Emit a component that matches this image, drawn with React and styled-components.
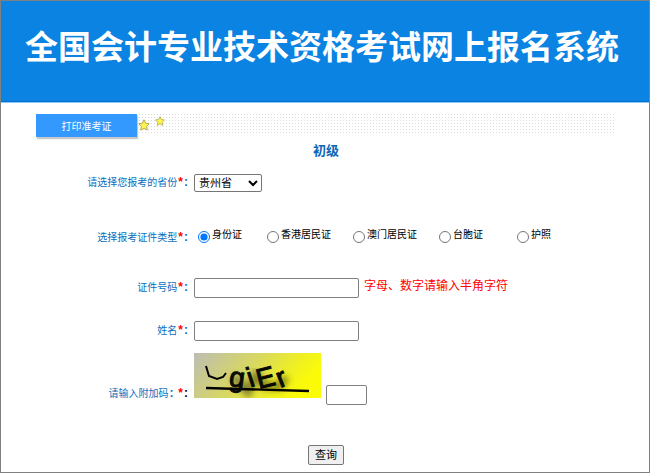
import React, { useState } from 'react';
import styled, { createGlobalStyle } from 'styled-components';

const GlobalStyle = createGlobalStyle`
    * {
        box-sizing: border-box;
    }
    body {
        margin: 0;
        background: #fff;
        font-family: "Liberation Sans", "Noto Sans CJK SC", sans-serif;
        font-size: 10px;
        color: #000;
    }
`

const Page = styled.div`
    min-height: 100vh;
    border: 1px solid #808080;
`

const Header = styled.header`
    display: flex;
    align-items: center;
    justify-content: center;
    height: 102px;
    padding-bottom: 7px;
    background: #0a83e2;
    border-bottom: 1px solid #8cc8f5;
    box-shadow: inset 0 -1px 0 #0570d0;
`

const SiteTitle = styled.h1`
    margin: 0;
    padding-right: 6px;
    font-size: 33px;
    line-height: 40px;
    font-weight: 700;
    white-space: nowrap;
    color: #fff;
`

const TabBar = styled.nav`
    display: flex;
    align-items: flex-start;
    height: 20px;
    margin: 10px 33px 0 35px;
    background-color: #fff;
    background-image: radial-gradient(circle, #dcdcdc 0 1px, transparent 1px);
    background-size: 3px 3px;
`

const Tab = styled.a`
    width: 101px;
    height: 23px;
    margin-top: 1px;
    line-height: 26px;
    text-align: center;
    text-decoration: none;
    color: #fff;
    background: #3399ff;
    box-shadow: 1px 2px 1px #c8c8c8;
`

const Stars = styled.svg`
    width: 30px;
    height: 20px;
`

const Form = styled.form`
    display: flex;
    flex-direction: column;
`

const Level = styled.h2`
    margin: 9px 0 13px;
    padding-left: 2px;
    font-size: 13px;
    line-height: 18px;
    text-align: center;
    color: #0d66b8;
`

const Row = styled.div`
    display: grid;
    grid-template-columns: 29% 1fr;
    column-gap: 5px;
    align-items: center;
    min-height: 20px;
    margin-bottom: ${props => props.$gap}px;
`

const Label = styled.label`
    line-height: 16px;
    padding-bottom: 1px;
    text-align: right;
    color: #0a6ebd;
`

const Star = styled.span`
    padding-left: 1px;
    font-size: 12px;
    font-weight: 700;
    color: #f00;
`

const Colon = styled.b`
    padding: 0 1px;
    font-size: 12px;
    color: ${props => props.$dark ? '#000' : 'inherit'};
`

const Field = styled.div`
    display: flex;
    align-items: ${props => props.$align || 'center'};
    gap: 5px;
`

const Select = styled.select`
    width: 68px;
    height: 18px;
    padding: 0;
    border: 1px solid #767676;
    border-radius: 2px;
    background-color: #fff;
    font-family: inherit;
    font-size: 11px;
`

const Radios = styled.div`
    display: grid;
    grid-template-columns: 69px 86px 86px 78px auto;
    justify-content: start;
    padding-left: 4px;
`

const Radio = styled.label`
    display: flex;
    align-items: center;
    gap: 2px;
    padding-bottom: 6px;
    line-height: 16px;
    white-space: nowrap;

    input{
        width: 12px;
        height: 12px;
        margin: 5px 0 0;
        accent-color: #0075ff;
    }
`

const Input = styled.input`
    width: ${props => props.$short ? 41 : 165}px;
    height: 20px;
    padding: 1px 2px;
    border: 1px solid #808080;
    border-radius: 2px;
    font-family: inherit;
    font-size: 11px;
`

const Tip = styled.span`
    font-size: 12px;
    line-height: 16px;
    padding-bottom: 4px;
    color: #f00;
`

const CodeRow = styled(Row)`
    align-items: end;
    margin-bottom: 40px;

    > label{
        padding-bottom: 3px;
    }
`

const Captcha = styled.svg`
    width: 127px;
    height: 45px;
    margin-bottom: 7px;
`

const Submit = styled.button`
    align-self: center;
    width: 36px;
    height: 20px;
    margin-left: 2px;
    padding: 0;
    border: 1px solid #767676;
    border-radius: 2px;
    background: #efefef;
    font-family: inherit;
    font-size: 11px;
    line-height: 18px;
`

const starPath = 'M0-5.2 L1.6-1.8 L5.2-1.3 L2.6 1.4 L3.3 5.1 L0 3.4 L-3.3 5.1 L-2.6 1.4 L-5.2-1.3 L-1.6-1.8Z';

const cardTypes = ['身份证', '香港居民证', '澳门居民证', '台胞证', '护照'];

const Code = () => (
    <Captcha viewBox="0 0 127 45" role="img" aria-label="附加码">
        <defs>
            <linearGradient id="codeBg" x1="0" y1="0" x2="1" y2="0.3">
                <stop offset="0" stopColor="#bdbdb4" />
                <stop offset="0.5" stopColor="#d8d860" />
                <stop offset="0.8" stopColor="#efef24" />
                <stop offset="1" stopColor="#fbfb08" />
            </linearGradient>
            <filter id="codeShade" x="-20%" y="-40%" width="140%" height="180%">
                <feGaussianBlur stdDeviation="3" />
            </filter>
        </defs>
        <rect width="127" height="45" fill="url(#codeBg)" />
        <path d="M40 24 L54 39 L62 22 L72 33 L86 33 L92 24" fill="none" stroke="#44420a" strokeWidth="8" opacity="0.6" filter="url(#codeShade)" />
        <path d="M12 13 L15 23 L23 26 L29 24 L32 20" fill="none" stroke="#000" strokeWidth="2" />
        <g fontFamily="Liberation Sans, sans-serif" fontSize="28" fontWeight="400" fill="#0a0a04" stroke="#0a0a04" strokeWidth="1">
            <text x="35" y="34" transform="rotate(8 43 28)">g</text>
            <text x="53" y="34" transform="rotate(-18 56 24)">i</text>
            <text x="62" y="34" transform="rotate(-14 71 24)">E</text>
            <text x="83" y="34" transform="rotate(-22 87 26)">r</text>
        </g>
        <path d="M12 35 L115 38" stroke="#000" strokeWidth="2.4" />
    </Captcha>
)

const App = () => {

    const [card, setCard] = useState('身份证');

    return (
        <>
            <GlobalStyle />
            <Page lang="zh-CN">
                <Header>
                    <SiteTitle>全国会计专业技术资格考试网上报名系统</SiteTitle>
                </Header>
                <TabBar>
                    <Tab href="#print">打印准考证</Tab>
                    <Stars viewBox="0 0 30 20" aria-hidden="true">
                        <g fill="#fff34d" stroke="#b5ad55" strokeLinejoin="round">
                            <path d={starPath} transform="translate(7 12)" />
                            <path d={starPath} transform="translate(23 8) scale(.85)" />
                        </g>
                    </Stars>
                </TabBar>
                <Form onSubmit={e => e.preventDefault()}>
                    <Level>初级</Level>
                    <Row $gap={33}>
                        <Label htmlFor="province">请选择您报考的省份<Star>*</Star><Colon>:</Colon></Label>
                        <Field>
                            <Select id="province" defaultValue="贵州省">
                                <option>贵州省</option>
                            </Select>
                        </Field>
                    </Row>
                    <Row $gap={29}>
                        <Label as="span" id="cardType">选择报考证件类型<Star>*</Star><Colon>:</Colon></Label>
                        <Radios role="radiogroup" aria-labelledby="cardType">
                            {cardTypes.map(type => (
                                <Radio key={type}>
                                    <input type="radio" name="card" checked={card === type} onChange={() => setCard(type)} />
                                    {type}
                                </Radio>
                            ))}
                        </Radios>
                    </Row>
                    <Row $gap={23}>
                        <Label htmlFor="cardNo">证件号码<Star>*</Star><Colon>:</Colon></Label>
                        <Field>
                            <Input id="cardNo" type="text" />
                            <Tip>字母、数字请输入半角字符</Tip>
                        </Field>
                    </Row>
                    <Row $gap={12}>
                        <Label htmlFor="userName">姓名<Star>*</Star><Colon>:</Colon></Label>
                        <Field>
                            <Input id="userName" type="text" />
                        </Field>
                    </Row>
                    <CodeRow>
                        <Label htmlFor="code">请输入附加码<Colon>:</Colon> <Star>*</Star><Colon $dark>:</Colon></Label>
                        <Field $align="flex-end">
                            <Code />
                            <Input id="code" type="text" $short />
                        </Field>
                    </CodeRow>
                    <Submit type="submit">查询</Submit>
                </Form>
            </Page>
        </>
    )
}
export default App;
